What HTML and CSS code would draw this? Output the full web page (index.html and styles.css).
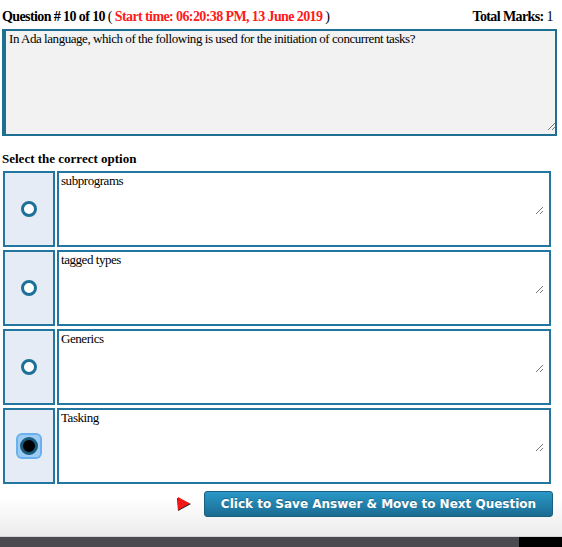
FILE: index.html
```html
<!DOCTYPE html>
<html>
	<head>
		<link rel="stylesheet" href="styles.css">
	</head>
	<body>
		<div id="quiz">
			<div class="head">
				<span><b>Question # 10 of 10</b> ( <b class="red">Start time: 06:20:38 PM, 13 June 2019</b> )</span>
				<span><b>Total Marks:</b> 1</span>
			</div>
			<div class="box">
				<textarea class="question" readonly>In Ada language, which of the following is used for the initiation of concurrent tasks?</textarea>
				<span class="grip qGrip"></span>
			</div>

			<h4 class="pick">Select the correct option</h4>

			<div class="options">
				<div class="row">
					<div class="radioCell"><span class="radio"></span></div>
					<div class="box">
						<textarea class="answer" readonly>subprograms</textarea>
						<span class="grip"></span>
					</div>
				</div>
				<div class="row">
					<div class="radioCell"><span class="radio"></span></div>
					<div class="box">
						<textarea class="answer" readonly>tagged types</textarea>
						<span class="grip"></span>
					</div>
				</div>
				<div class="row">
					<div class="radioCell"><span class="radio"></span></div>
					<div class="box">
						<textarea class="answer" readonly>Generics</textarea>
						<span class="grip"></span>
					</div>
				</div>
				<div class="row">
					<div class="radioCell"><span class="focus"><span class="radio checked"></span></span></div>
					<div class="box">
						<textarea class="answer" readonly>Tasking</textarea>
						<span class="grip"></span>
					</div>
				</div>
			</div>
		</div>

		<div class="footer">
			<div class="actions">
				<svg class="flag" width="16" height="16" viewBox="0 0 16 16">
					<polygon points="1,2 2,15 15,8" fill="#222"/>
					<polygon points="2,1 2,14 14,7.5" fill="#f01818"/>
				</svg>
				<button id="next">Click to Save Answer &amp; Move to Next Question</button>
			</div>
		</div>
		<div class="dock">
			<div class="dockBar"></div>
			<div class="dockEnd"></div>
		</div>
	</body>
</html>
```

FILE: styles.css
```css
html, body {
	margin: 0;
	padding: 0;
	background: #fff;
	overflow: hidden;
}

body {
	width: 562px;
	height: 547px;
	display: flex;
	flex-direction: column;
	font-family: "Liberation Serif", "Times New Roman", serif;
	color: #000;
}

#quiz {
	padding: 7px 0 0 2px;
}

.head {
	display: flex;
	justify-content: space-between;
	font-size: 14px;
	letter-spacing: -0.6px;
	line-height: 20px;
	padding-right: 9px;
}

.red {
	color: #ff1a1a;
}

.box {
	position: relative;
}

textarea {
	display: block;
	font-family: "Liberation Serif", "Times New Roman", serif;
	font-size: 13px;
	letter-spacing: -0.45px;
	line-height: 15px;
	color: #000;
	box-sizing: border-box;
	margin: 0;
	outline: none;
	resize: none;
	overflow: hidden;
}

.grip {
	position: absolute;
	right: 8px;
	bottom: 33px;
	width: 7px;
	height: 7px;
	background: linear-gradient(135deg, transparent 44%, #777 44%, #777 52%, transparent 52%, transparent 72%, #777 72%, #777 80%, transparent 80%);
}

.qGrip {
	right: 7px;
	bottom: 6px;
}

.question {
	margin-top: 2px;
	width: 555px;
	height: 107px;
	background: #f2f2f2;
	border: 2px solid #1f6f92;
	border-left-width: 4px;
	padding: 0 3px;
}

.pick {
	margin: 15px 0 5px;
	font-size: 13px;
	line-height: 15px;
}

.options {
	display: flex;
	flex-direction: column;
	gap: 3px;
	padding-left: 1px;
}

.row {
	display: flex;
	gap: 2px;
	height: 76px;
}

.radioCell {
	width: 52px;
	box-sizing: border-box;
	border: 2px solid #2276a0;
	background: #e6ecf6;
	display: flex;
	align-items: center;
	justify-content: center;
}

.radio {
	display: block;
	width: 16px;
	height: 16px;
	box-sizing: border-box;
	border: 3px solid #1d7097;
	border-radius: 50%;
	background: #fff;
}

.radio.checked {
	border: 3px solid #1a5a7e;
	background: #000;
	width: 18px;
	height: 18px;
}

.focus {
	display: flex;
	align-items: center;
	justify-content: center;
	width: 22px;
	height: 22px;
	border-radius: 4px;
	background: #9cccf2;
	box-shadow: 0 0 0 2px #6bb0ee;
}

.answer {
	width: 494px;
	height: 76px;
	background: #fff;
	border: 2px solid #2276a0;
	padding: 0 2px;
}

.footer {
	flex: 1;
	background: linear-gradient(#fff 0px, #fff 14px, #ececec 100%);
	border-bottom: 1px solid #d4d4d4;
}

.actions {
	display: flex;
	justify-content: flex-end;
	align-items: center;
	gap: 12px;
	padding: 7px 9px 0 0;
}

.flag {
	display: block;
}

#next {
	width: 349px;
	height: 26px;
	border: 1px solid #1b5f80;
	border-radius: 3px;
	background: linear-gradient(#2a98c8, #1b6b92);
	color: #fff;
	font-family: "DejaVu Sans", Verdana, sans-serif;
	font-weight: bold;
	font-size: 12px;
	text-shadow: 0 -1px 0 rgba(0, 0, 0, 0.25);
	padding: 0;
}

.dock {
	display: flex;
	height: 10px;
}

.dockBar {
	width: 519px;
	background: #4a4a4f;
}

.dockEnd {
	flex: 1;
	background: #000;
}
```
